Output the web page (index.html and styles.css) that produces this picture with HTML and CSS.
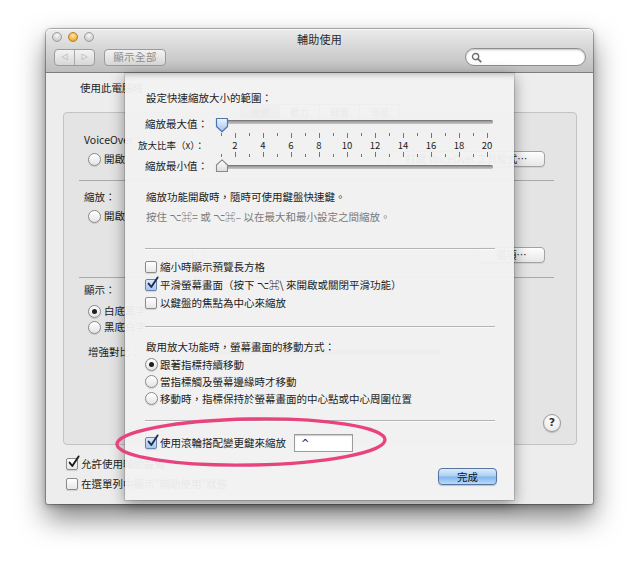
FILE: index.html
```html
<!DOCTYPE html>
<html lang="zh-Hant">
<head>
<meta charset="utf-8">
<title>輔助使用</title>
<link rel="stylesheet" href="styles.css">
</head>
<body>
<div class="desk">
  <div class="window">
    <header class="titlebar">
      <div class="titlerow">
        <div class="lights">
          <span class="light"></span>
          <span class="light light-min"></span>
          <span class="light"></span>
        </div>
        <div class="title">輔助使用</div>
        <div></div>
      </div>
      <div class="toolbar">
        <div class="navseg"><span class="navbtn">◁</span><span class="navbtn">▷</span></div>
        <div class="tbtn">顯示全部</div>
        <div class="search">
          <svg class="search-icon" viewBox="0 0 12 12" width="11" height="11"><circle cx="5" cy="5" r="3.4" fill="none" stroke="#6e6e6e" stroke-width="1.5"/><path d="M7.5 7.5 L10.6 10.6" stroke="#6e6e6e" stroke-width="1.9" stroke-linecap="round"/></svg>
        </div>
      </div>
    </header>

    <main class="pane">
      <div class="intro">使用此電腦時</div>
      <section class="tabview">
        <div class="tabs"><span class="tab tab-on">視覺</span><span class="tab">聽力</span><span class="tab">鍵盤</span><span class="tab">滑鼠</span></div>

        <div class="grow r1"><span class="glabel">VoiceOver：</span></div>
        <div class="grow r2">
          <div class="radios"><span class="opt"><span class="rb"></span>開啟</span></div>
          <span class="pbtn pbtn-vo">打開 VoiceOver 工具程式…</span>
        </div>
        <div class="gdiv"></div>

        <div class="grow r3"><span class="glabel">縮放：</span></div>
        <div class="grow r4">
          <div class="radios"><span class="opt"><span class="rb"></span>開啟</span></div>
        </div>
        <div class="grow r5 indent"></div>
        <div class="grow r6 indent">
          <span class="cb"></span>
          <span class="pbtn pbtn-opt">選項…</span>
        </div>
        <div class="gdiv"></div>

        <div class="grow r7"><span class="glabel">顯示：</span></div>
        <div class="grow r8">
          <div class="radios"><span class="opt"><span class="rb rb-on"></span>白底黑字</span></div>
        </div>
        <div class="grow r9">
          <div class="radios"><span class="opt"><span class="rb"></span>黑底白字</span></div>
        </div>
        <div class="grow r10">
          <span class="glabel glabel-in">增強對比：</span>
          <span class="ctrack"></span>
        </div>
        <div class="grow r11 indent"></div>
        <div class="grow r12 indent">
          <span class="help">?</span>
        </div>
      </section>

      <div class="mchk mchk-1"><span class="cb cb-plain"><svg viewBox="0 0 13 14"><path d="M2.6 7.6 L5.3 11 L11.6 1.4" fill="none" stroke="#1b1b1b" stroke-width="1.9" stroke-linecap="round" stroke-linejoin="round"/></svg></span>允許使用輔助設備</div>
      <div class="mchk mchk-2"><span class="cb"></span>在選單列中顯示"輔助使用"狀態</div>
    </main>

    <div class="sheet">
      <div class="shead">設定快速縮放大小的範圍：</div>

      <div class="slgrid">
        <div class="sllabel">縮放最大值：</div>
        <div class="slider slider-max">
          <span class="track"></span>
          <svg class="thumb thumb-down" viewBox="0 0 14 16"><defs><linearGradient id="tb" x1="0" y1="0" x2="0" y2="1"><stop offset="0" stop-color="#eef5fd"/><stop offset="1" stop-color="#9dc3ee"/></linearGradient></defs><path d="M1.5 1.5 H12.5 V9.5 L7 14.8 L1.5 9.5 Z" fill="url(#tb)" stroke="#4b76ad" stroke-width="1.2" stroke-linejoin="round"/></svg>
        </div>

        <div></div>
        <div class="ticks ticks-top"><i></i><i></i><i></i><i></i><i></i><i></i><i></i><i></i><i></i><i></i><i></i><i></i><i></i><i></i><i></i><i></i><i></i><i></i><i></i><i></i></div>

        <div class="ratiolbl">放大比率（x）：</div>
        <div class="nums"><span>2</span><span>4</span><span>6</span><span>8</span><span>10</span><span>12</span><span>14</span><span>16</span><span>18</span><span>20</span></div>

        <div></div>
        <div class="ticks ticks-bot"><i></i><i></i><i></i><i></i><i></i><i></i><i></i><i></i><i></i><i></i><i></i><i></i><i></i><i></i><i></i><i></i><i></i><i></i><i></i><i></i></div>

        <div class="sllabel">縮放最小值：</div>
        <div class="slider slider-min">
          <span class="track"></span>
          <svg class="thumb thumb-up" viewBox="0 0 14 14"><defs><linearGradient id="tw" x1="0" y1="0" x2="0" y2="1"><stop offset="0" stop-color="#ffffff"/><stop offset="1" stop-color="#dcdcdc"/></linearGradient></defs><path d="M1.5 12.5 H12.5 V6 L7 0.9 L1.5 6 Z" fill="url(#tw)" stroke="#8a8a8a" stroke-width="1.1" stroke-linejoin="round"/></svg>
        </div>
      </div>

      <p class="spara spara-1">縮放功能開啟時，隨時可使用鍵盤快速鍵。</p>
      <p class="spara spara-2">按住 ⌥⌘= 或 ⌥⌘– 以在最大和最小設定之間縮放。</p>

      <div class="sdiv sdiv-1"></div>

      <div class="schecks">
        <div class="srow"><span class="cb"></span>縮小時顯示預覽長方格</div>
        <div class="srow"><span class="cb cb-on"><svg viewBox="0 0 13 14"><path d="M2.6 7.6 L5.3 11 L11.6 1.4" fill="none" stroke="#1c2f57" stroke-width="1.9" stroke-linecap="round" stroke-linejoin="round"/></svg></span>平滑螢幕畫面（按下 ⌥⌘\ 來開啟或關閉平滑功能）</div>
        <div class="srow"><span class="cb"></span>以鍵盤的焦點為中心來縮放</div>
      </div>

      <div class="sdiv sdiv-2"></div>

      <div class="shead2">啟用放大功能時，螢幕畫面的移動方式：</div>
      <div class="sradios">
        <div class="rrow"><span class="rb rb-on"></span>跟著指標持續移動</div>
        <div class="rrow"><span class="rb"></span>當指標觸及螢幕邊緣時才移動</div>
        <div class="rrow"><span class="rb"></span>移動時，指標保持於螢幕畫面的中心點或中心周圍位置</div>
      </div>

      <div class="sdiv sdiv-3"></div>

      <div class="wheelrow">
        <span class="cb cb-on"><svg viewBox="0 0 13 14"><path d="M2.6 7.6 L5.3 11 L11.6 1.4" fill="none" stroke="#1c2f57" stroke-width="1.9" stroke-linecap="round" stroke-linejoin="round"/></svg></span>
        <span>使用滾輪搭配變更鍵來縮放</span>
        <span class="keyfield">^</span>
      </div>

      <div class="donerow"><span class="done">完成</span></div>
    </div>
  </div>

  <svg class="ring" viewBox="0 0 284 60" width="284" height="60">
    <ellipse cx="142" cy="30" rx="134" ry="23" fill="none" stroke="#e8437f" stroke-width="3.4" transform="rotate(-1 142 30)"/>
  </svg>
</div>
</body>
</html>
```

FILE: styles.css
```css
* { box-sizing: border-box; margin: 0; padding: 0; }
html, body { background: #ffffff; }
body {
  width: 640px;
  height: 571px;
  overflow: hidden;
  font-family: "Noto Sans CJK TC", "DejaVu Sans", sans-serif;
  font-size: 10.5px;
  line-height: 14px;
  color: #1c1c1c;
}
.desk { position: relative; width: 640px; height: 571px; }

/* ---------- window ---------- */
.window {
  position: absolute;
  left: 46px;
  top: 29px;
  width: 547px;
  height: 475px;
  background: #ededed;
  border-radius: 5px 5px 2px 2px;
  box-shadow: 0 0 0 1px rgba(0,0,0,.26), 0 14px 28px rgba(0,0,0,.5), 0 2px 6px rgba(0,0,0,.25);
}
.titlebar {
  height: 44px;
  border-radius: 5px 5px 0 0;
  background: linear-gradient(#ececec, #d6d6d6 45%, #bebebe);
  border-bottom: 1px solid #7d7d7d;
  box-shadow: inset 0 1px 0 #f9f9f9;
}
.titlerow {
  display: grid;
  grid-template-columns: 1fr auto 1fr;
  height: 19px;
  align-items: start;
}
.lights { display: flex; gap: 6px; padding: 3px 0 0 6px; }
.light {
  width: 10px;
  height: 10px;
  border-radius: 50%;
  border: 1px solid #9c9c9c;
  background: radial-gradient(circle at 50% 30%, #f6f6f6, #cfcfcf 70%, #bcbcbc);
}
.light-min {
  border-color: #b57f27;
  background: radial-gradient(circle at 50% 35%, #ffeab0, #f3b43f 60%, #d98d16);
}
.title { padding-top: 3px; font-size: 11px; color: #2a2a2a; letter-spacing: .3px; }

.toolbar {
  display: flex;
  align-items: center;
  height: 18px;
  padding: 0 7px 0 8px;
  gap: 9px;
}
.navseg {
  display: flex;
  width: 41px;
  height: 17px;
  border: 1px solid #9b9b9b;
  border-radius: 4px;
  background: linear-gradient(#f3f3f3, #d7d7d7);
  overflow: hidden;
}
.navbtn {
  flex: 1;
  display: flex;
  align-items: center;
  justify-content: center;
  font-family: "DejaVu Sans", sans-serif;
  font-size: 8px;
  color: #a9a9a9;
}
.navbtn + .navbtn { border-left: 1px solid #a8a8a8; }
.tbtn {
  width: 62px;
  height: 17px;
  border: 1px solid #9b9b9b;
  border-radius: 4px;
  background: linear-gradient(#f3f3f3, #d7d7d7);
  color: #8b8b8b;
  display: flex;
  align-items: center;
  justify-content: center;
  letter-spacing: .4px;
}
.search {
  margin-left: auto;
  width: 121px;
  height: 18px;
  border: 1px solid #8e8e8e;
  border-radius: 9px;
  background: #ffffff;
  box-shadow: inset 0 1px 2px rgba(0,0,0,.25);
  display: flex;
  align-items: center;
  padding-left: 5px;
}

/* ---------- main pane ---------- */
.pane { height: 431px; padding: 8px 0 0 17px; }
.intro { height: 14px; padding-left: 17px; }
.tabview {
  margin-top: 17px;
  width: 514px;
  height: 333px;
  border: 1px solid #c3c3c3;
  border-radius: 4px;
  background: #e4e4e4;
  padding: 0 32px 0 20px;
}
.tabs {
  display: flex;
  justify-content: center;
  margin: -9px -32px 0 -20px;
  height: 15px;
}
.tab {
  width: 40px;
  height: 15px;
  border: 1px solid #9d9d9d;
  border-left: none;
  background: linear-gradient(#fbfbfb, #e2e2e2);
  display: flex;
  align-items: center;
  justify-content: center;
  font-size: 9.5px;
  line-height: 12px;
}
.tab:first-child { border-left: 1px solid #9d9d9d; border-radius: 4px 0 0 4px; }
.tab:last-child { border-radius: 0 4px 4px 0; }
.tab-on { background: linear-gradient(#b9b9b9, #9c9c9c); color: #111; }

.grow { display: flex; align-items: center; }
.glabel { width: 108px; flex: none; }
.glabel-in { padding-left: 4px; }
.indent { padding-left: 108px; }
.radios { width: 104px; margin-left: 4px; display: flex; gap: 10px; flex: none; }
.opt { display: flex; align-items: center; gap: 3px; }

.r1 { margin-top: 14px; height: 14px; }
.r2 { margin-top: 4px; height: 16px; }
.r3 { margin-top: 9px; height: 14px; }
.r4 { margin-top: 6px; height: 12px; }
.r5 { height: 12px; }
.r6 { margin-top: 13px; height: 16px; }
.r7 { margin-top: 5px; height: 14px; }
.r8 { margin-top: 6px; height: 16px; }
.r9 { height: 16px; }
.r10 { margin-top: 10px; height: 14px; }
.r11 { margin-top: 12px; height: 12px; }
.r12 { margin-top: 24px; height: 25px; align-items: stretch; }
.gdiv { margin: 13px -10px 0 -5px; height: 1px; background: #a9a9a9; }
.r2 + .gdiv { margin-top: 13px; }
.r6 + .gdiv { margin-top: 14px; }

.pbtn {
  margin-left: auto;
  margin-right: -1px;
  height: 16px;
  border: 1px solid #a2a2a2;
  border-radius: 4px;
  background: linear-gradient(#fefefe, #e8e8e8);
  box-shadow: 0 1px 0 rgba(0,0,0,.07);
  display: flex;
  align-items: center;
  justify-content: center;
  font-size: 10px;
}
.pbtn-vo { width: 157px; }
.pbtn-opt { width: 67px; }
.ctrack { width: 250px; height: 4px; border-radius: 2px; background: #a4a4a4; }
.help {
  align-self: flex-end;
  margin-left: auto;
  margin-right: -17px;
  width: 18px;
  height: 18px;
  border-radius: 50%;
  border: 1px solid #9a9a9a;
  background: radial-gradient(circle at 50% 30%, #ffffff, #e6e6e6);
  box-shadow: 0 1px 1px rgba(0,0,0,.2);
  display: flex;
  align-items: center;
  justify-content: center;
  font-family: "DejaVu Sans", sans-serif;
  font-weight: bold;
  font-size: 11px;
  color: #333;
}

.mchk { display: flex; align-items: center; gap: 3px; height: 14px; padding-left: 3px; }
.mchk-1 { margin-top: 12px; }
.mchk-2 { margin-top: 6px; }

/* ---------- controls ---------- */
.cb {
  position: relative;
  flex: none;
  width: 12px;
  height: 12px;
  border: 1px solid #8b8b8b;
  border-radius: 2px;
  background: linear-gradient(#ffffff, #e7e7e7);
  box-shadow: 0 1px 1px rgba(0,0,0,.12);
}
.cb svg { position: absolute; left: 0; top: -4px; width: 13px; height: 14px; }
.cb-on { background: linear-gradient(#dde9f7, #a8c7ec); border-color: #6a85ad; }
.rb {
  flex: none;
  width: 13px;
  height: 13px;
  border-radius: 50%;
  border: 1px solid #8a8a8a;
  background: linear-gradient(#ffffff, #e4e4e4);
  box-shadow: 0 1px 1px rgba(0,0,0,.12);
  display: inline-flex;
  align-items: center;
  justify-content: center;
}
.rb-on::after { content: ""; width: 5px; height: 5px; border-radius: 50%; background: #1f1f1f; }

/* ---------- sheet ---------- */
.sheet {
  position: absolute;
  left: 79px;
  top: 44px;
  width: 389px;
  height: 427px;
  background: rgba(241,241,241,.955);
  box-shadow: 0 4px 14px rgba(0,0,0,.42), 0 0 0 1px rgba(0,0,0,.12), inset 0 7px 6px -6px rgba(0,0,0,.28);
  padding: 18px 19px 0 20px;
}
.shead { height: 14px; padding-left: 1px; }
.slgrid {
  margin: 11px 0 0 -7px;
  display: grid;
  grid-template-columns: 76px 280px;
  grid-template-rows: 16px 7px 12px 7px 16px;
}
.sllabel { padding-left: 7px; line-height: 16px; }
.ratiolbl { font-size: 9.5px; line-height: 12px; }
.slider { position: relative; }
.track {
  display: block;
  margin: 0 1px 0 3px;
  height: 4px;
  border-radius: 2px;
  background: linear-gradient(#8e8e8e, #c4c4c4);
  box-shadow: inset 0 1px 1px rgba(0,0,0,.2);
}
.slider-max .track { margin-top: 4px; }
.slider-min .track { margin-top: 7px; }
.thumb { position: absolute; left: 1px; top: 1px; width: 14px; }
.thumb-down { height: 16px; }
.thumb-up { height: 14px; }
.ticks { display: grid; grid-template-columns: repeat(20, 14px); }
.ticks i { justify-self: center; width: 1px; height: 3px; background: #747474; }
.ticks i:nth-child(even) { height: 5px; }
.ticks-top { align-items: start; padding-top: 1px; }
.ticks-bot { align-items: end; padding-bottom: 1px; }
.nums {
  display: grid;
  grid-template-columns: repeat(10, 28px);
  padding-left: 7px;
  font-size: 9.5px;
  line-height: 12px;
  text-align: center;
}
.spara { height: 14px; padding-left: 1px; }
.spara-1 { margin-top: 16px; }
.spara-2 { margin-top: 6px; color: #7a7a7a; }
.sdiv { height: 1px; background: #b4b4b4; box-shadow: 0 1px 0 rgba(255,255,255,.6); }
.sdiv-1 { margin-top: 24px; }
.sdiv-2 { margin-top: 14px; }
.sdiv-3 { margin-top: 13px; }
.schecks { margin-top: 9px; }
.srow { display: flex; align-items: center; gap: 3px; height: 18px; }
.shead2 { margin-top: 13px; height: 14px; padding-left: 1px; }
.sradios { margin-top: 2px; }
.rrow { display: flex; align-items: center; gap: 2px; height: 17px; }
.wheelrow { margin-top: 13px; height: 18px; display: flex; align-items: center; gap: 3px; }
.keyfield {
  margin-left: 5px;
  width: 59px;
  height: 18px;
  background: #ffffff;
  border: 1px solid #9c9c9c;
  box-shadow: inset 0 1px 1px rgba(0,0,0,.2);
  padding-left: 6px;
  font-family: "DejaVu Sans", sans-serif;
  font-size: 10px;
  line-height: 17px;
}
.donerow { margin: 16px -2px 0 0; display: flex; justify-content: flex-end; }
.done {
  width: 59px;
  height: 17px;
  border: 1px solid #56749f;
  border-radius: 4px;
  background: linear-gradient(#dcebfb 0%, #acd0f5 45%, #84b6ee 55%, #b9dbfb 100%);
  box-shadow: 0 1px 1px rgba(0,0,0,.2);
  display: flex;
  align-items: center;
  justify-content: center;
  color: #111;
}

/* ---------- annotation ---------- */
.ring { position: absolute; left: 109px; top: 412px; }
```
